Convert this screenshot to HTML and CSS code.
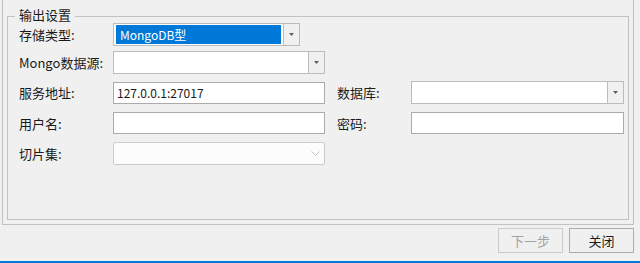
FILE: index.html
```html
<!DOCTYPE html>
<html lang="zh-CN">
<head>
  <meta charset="UTF-8" />
  <title>输出设置</title>
  <link rel="stylesheet" href="styles.css">
</head>
<body>

  <!-- SETTINGS PANEL -->
  <div class="panel">
    <div class="group">
      <div class="group-title">输出设置</div>

      <div class="row r1">
        <span class="lbl">存储类型:</span>
        <div class="combo short">
          <div class="combo-text"><span class="sel">MongoDB型</span></div>
          <div class="drop"><svg width="5" height="3" viewBox="0 0 5 3"><polygon points="0,0 5,0 2.5,3" fill="#5f5f5f"/></svg></div>
        </div>
      </div>

      <div class="row r2">
        <span class="lbl">Mongo数据源:</span>
        <div class="combo">
          <div class="combo-text"></div>
          <div class="drop"><svg width="5" height="3" viewBox="0 0 5 3"><polygon points="0,0 5,0 2.5,3" fill="#5f5f5f"/></svg></div>
        </div>
      </div>

      <div class="row r3">
        <span class="lbl">服务地址:</span>
        <div class="textbox">127.0.0.1:27017</div>
        <span class="lbl right">数据库:</span>
        <div class="combo wide">
          <div class="combo-text"></div>
          <div class="drop"><svg width="5" height="3" viewBox="0 0 5 3"><polygon points="0,0 5,0 2.5,3" fill="#5f5f5f"/></svg></div>
        </div>
      </div>

      <div class="row r4">
        <span class="lbl">用户名:</span>
        <div class="textbox"></div>
        <span class="lbl right">密码:</span>
        <div class="textbox wide"></div>
      </div>

      <div class="row r5">
        <span class="lbl">切片集:</span>
        <div class="droplist">
          <svg width="9" height="5" viewBox="0 0 9 5"><polyline points="0.5,0.5 4.5,4.5 8.5,0.5" fill="none" stroke="#c4c4c4" stroke-width="1"/></svg>
        </div>
      </div>
    </div>
  </div>

  <!-- BUTTONS -->
  <div class="footer">
    <button class="btn" disabled>下一步</button>
    <button class="btn">关闭</button>
  </div>

  <div class="taskbar"></div>

</body>
</html>
```

FILE: styles.css
```css
body {
  margin: 0;
  height: 263px;
  background: #f0f0f0;
  font-family: "Noto Sans CJK SC", "Noto Sans", sans-serif;
  font-size: 13px;
  color: #1a1a1a;
  display: flex;
  flex-direction: column;
  overflow: hidden;
}
.panel {
  box-sizing: border-box;
  height: 225px;
  width: 632px;
  margin-left: 2px;
  padding: 16px 4px 4px 4px;
  border: 1px solid #c2c2c2;
  border-top: none;
  display: flex;
}
.group {
  flex: 1;
  border: 1px solid #c2c2c2;
}
.group-title {
  width: fit-content;
  margin: -10px 0 0 7px;
  padding: 0 4px;
  line-height: 16px;
  height: 16px;
  background: #f0f0f0;
}
.row {
  display: flex;
  align-items: center;
  padding-left: 11px;
}
.r1 { margin-top: 0; }
.r2 { margin-top: 5px; }
.r3 { margin-top: 7px; }
.r4 { margin-top: 8px; }
.r5 { margin-top: 8px; }
.lbl {
  width: 94px;
  font-size: 13px;
  white-space: nowrap;
}
.lbl.right {
  margin-left: 12px;
  width: 74px;
}
.combo {
  box-sizing: border-box;
  width: 212px;
  height: 23px;
  border: 1px solid #bcbcbc;
  background: #fff;
  display: flex;
}
.combo.short { width: 187px; }
.combo.wide { width: 213px; }
.combo-text {
  flex: 1;
  padding: 1px 2px;
  display: flex;
}
.sel {
  flex: 1;
  background: #0078d7;
  color: #fff;
  font-size: 12px;
  line-height: 19px;
  padding-left: 4px;
}
.drop {
  width: 15px;
  border-left: 1px solid #bcbcbc;
  background: #f0f0f0;
  display: flex;
  align-items: center;
  justify-content: center;
}
.textbox {
  box-sizing: border-box;
  width: 212px;
  height: 22px;
  border: 1px solid #ababab;
  background: #fff;
  font-size: 12px;
  line-height: 20px;
  padding-left: 3px;
}
.textbox.wide { width: 213px; }
.droplist {
  box-sizing: border-box;
  width: 212px;
  height: 23px;
  border: 1px solid #cccccc;
  border-radius: 2px;
  background: #fcfcfc;
  display: flex;
  align-items: center;
  justify-content: flex-end;
  padding-right: 4px;
}
.footer {
  display: flex;
  justify-content: flex-end;
  gap: 6px;
  margin-top: 3px;
  padding-right: 6px;
}
.btn {
  box-sizing: border-box;
  width: 65px;
  height: 25px;
  border: 1px solid #adadad;
  background: #f0f0f0;
  font-family: inherit;
  font-size: 13px;
  color: #1a1a1a;
  padding: 0;
}
.btn:disabled {
  border-color: #cccccc;
  color: #a3a3a3;
}
.taskbar {
  margin-top: auto;
  height: 2px;
  background: #0078d7;
}
```
